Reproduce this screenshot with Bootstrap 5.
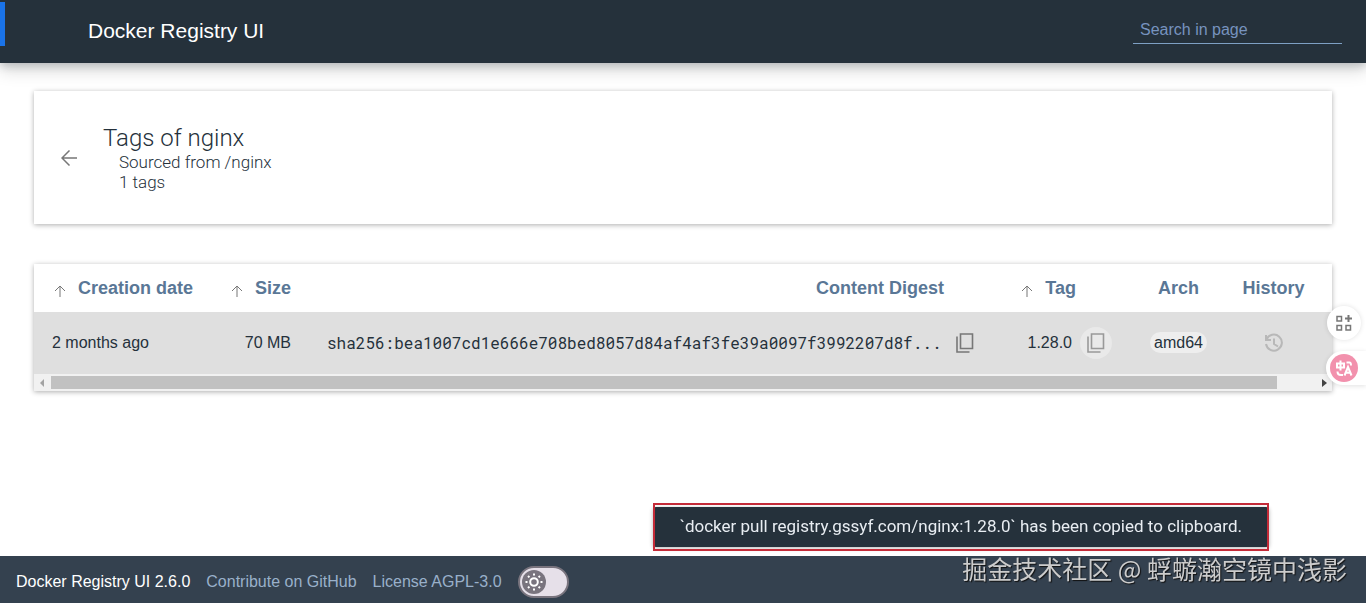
<!DOCTYPE html>
<html lang="en">
<head>
<meta charset="utf-8">
<meta name="viewport" content="width=device-width, initial-scale=1">
<title>Docker Registry UI</title>
<link rel="stylesheet" href="https://cdn.jsdelivr.net/npm/bootstrap@5.3.0/dist/css/bootstrap.min.css">
<style>
  body { font-family: "Liberation Sans", Arial, sans-serif; font-size: 16px; color: #25313b; background: #fff; }
  svg { display: block; flex: none; }
  .topbar { height: 63px; padding: 0 24px 2px 88px; background: #25313b; box-shadow: 0 3px 8px rgba(37,49,59,.22), 0 8px 16px rgba(0,0,0,.14); }
  .topbar .brand { font-size: 21px; line-height: 24px; color: #fff; text-decoration: none; }
  .edge-mark { top: 2px; left: 0; width: 5px; height: 44px; background: #1a73e8; }
  .search-box { width: 209px; height: 26px; padding: 0 7px; border: 0; border-bottom: 1px solid #7ea0c4; border-radius: 0; background: transparent; color: #fff; outline: 0; }
  .search-box::placeholder { color: #7793bf; opacity: 1; }
  main { padding: 28px 34px; }
  .panel { background: #fff; box-shadow: 0 1px 5px rgba(0,0,0,.32); }
  .head-panel { padding: 33px 24px 32px 20px; margin-bottom: 40px; font-family: Roboto, sans-serif; font-weight: 300; line-height: 20px; }
  .head-panel h1 { font-size: 24px; font-weight: 300; line-height: 28px; margin: 0; }
  .head-panel .info { font-size: 17px; padding: 0 0 0 16px; margin: 0; }
  .plain-btn { padding: 0; border: 0; background: transparent; color: #777; }
  .back-btn { width: 30px; height: 30px; margin-right: 19px; }
  .tags { table-layout: fixed; width: 100%; }
  .tags th { height: 48px; padding: 0 18px; font-size: 18px; color: #5a7796; text-align: right; white-space: nowrap; }
  .tags td { height: 62px; padding: 0 18px; background: #dfdfdf; white-space: nowrap; }
  .tags th svg { display: inline-block; margin: 4px 12px 0 0; color: #777; vertical-align: middle; }
  .tags th.digest-head { padding-right: 54px; }
  .tags th.tag-head { padding-right: 54px; }
  .tags .mid { padding: 0; text-align: center; }
  .c-date { width: 177px; } .c-size { width: 98px; } .c-tag { width: 132px; } .c-arch { width: 97px; } .c-hist { width: 105px; }
  .tags .end-cell { padding-right: 12px; }
  .tags .copy-cell { padding-right: 18px; }
  .digest { font-family: "Roboto Mono", "Liberation Mono", monospace; }
  .round-btn { width: 32px; height: 32px; border-radius: 50%; }
  .round-btn.hot { background: #e9e9e9; color: #999; }
  .arch { padding: 2px 4px; border-radius: 12px; background: #eee; }
  .scrollbar-x { height: 17px; padding: 0 5px; background: #f1f1f1; gap: 6px; }
  .scrollbar-x .rail { height: 13px; }
  .scrollbar-x .thumb { height: 13px; width: 97%; background: #c1c1c1; }
  .foot { min-height: 47px; padding: 4px 16px 0; background: #34414f; gap: 16px; line-height: 20px; color: #fff; }
  .foot a { color: #99b0ca; text-decoration: none; }
  .theme { width: 51px; height: 32px; border: 2px solid #79747e; border-radius: 16px; background: #e6e0e9; }
  .theme input { inset: 0; opacity: 0; margin: 0; }
  .theme svg { margin: 1px 0 0 1px; }
  .snack { right: 97px; bottom: 56px; height: 40px; padding: 0 27px; border-radius: 3px; background: #25313b; color: #e8edf2; font-family: Roboto, sans-serif; font-size: 17px; box-shadow: 0 1px 4px rgba(0,0,0,.3); }
  .snack::after { content: ""; position: absolute; inset: -4px 0; border: 2px solid #c42b38; }
  .credit { right: 19px; bottom: 17px; font-family: "Noto Sans CJK SC", sans-serif; font-size: 25px; line-height: 36px; color: #ccc; text-shadow: 1px 1px 1px #111; }
  .tools { right: 0; top: 306px; gap: 11px; }
  .tool-apps { width: 34px; height: 34px; margin-right: 5px; border-radius: 50%; background: #fff; box-shadow: 0 0 5px rgba(0,0,0,.12); }
  .tool-translate { width: 40px; height: 34px; padding-left: 4px; border-radius: 17px 0 0 17px; background: #fff; box-shadow: 0 1px 5px rgba(0,0,0,.12); }
</style>
</head>
<body class="d-flex flex-column min-vh-100">
<header class="topbar d-flex align-items-center justify-content-between position-relative">
  <span class="edge-mark position-absolute"></span>
  <a class="brand" href="#">Docker Registry UI</a>
  <input class="search-box" type="text" placeholder="Search in page" aria-label="Search in page">
</header>

<main class="flex-grow-1">
  <section class="panel head-panel d-flex align-items-center">
    <button class="plain-btn back-btn d-flex align-items-center justify-content-center" type="button" aria-label="Back">
      <svg width="16" height="16" viewBox="0 0 16 16" fill="none" stroke="currentColor" stroke-width="1.5"><path d="M16 8H1M8.500.5L1 8l7.500 7.500"/></svg>
    </button>
    <div>
      <h1>Tags of nginx</h1>
      <p class="info">Sourced from /nginx<br>1 tags</p>
    </div>
  </section>

  <section class="panel">
    <table class="tags">
      <colgroup><col class="c-date"><col class="c-size"><col><col class="c-tag"><col class="c-arch"><col class="c-hist"></colgroup>
      <thead>
        <tr>
          <th scope="col"><svg width="12" height="12" viewBox="0 0 12 12" fill="none" stroke="currentColor"><path d="M6 12V1M1 6l5-5 5 5"/></svg>Creation date</th>
          <th scope="col"><svg width="12" height="12" viewBox="0 0 12 12" fill="none" stroke="currentColor"><path d="M6 12V1M1 6l5-5 5 5"/></svg>Size</th>
          <th scope="col" class="digest-head">Content Digest</th>
          <th scope="col" class="tag-head"><svg width="12" height="12" viewBox="0 0 12 12" fill="none" stroke="currentColor"><path d="M6 12V1M1 6l5-5 5 5"/></svg>Tag</th>
          <th scope="col" class="mid">Arch</th>
          <th scope="col" class="mid end-cell">History</th>
        </tr>
      </thead>
      <tbody>
        <tr>
          <td>2 months ago</td>
          <td class="text-end">70 MB</td>
          <td class="copy-cell">
            <div class="d-flex align-items-center justify-content-end gap-2">
              <span class="digest">sha256:bea1007cd1e666e708bed8057d84af4af3fe39a0097f3992207d8f...</span>
              <button class="plain-btn round-btn d-flex align-items-center justify-content-center" type="button" aria-label="Copy digest">
                <svg width="18" height="20" viewBox="0 0 18 20" fill="none" stroke="currentColor" stroke-width="1.600"><path d="M4.500 1h12v14.500h-12zM1 3.500V19h12.500"/></svg>
              </button>
            </div>
          </td>
          <td class="copy-cell">
            <div class="d-flex align-items-center justify-content-end gap-2">
              <span>1.28.0</span>
              <button class="plain-btn round-btn hot d-flex align-items-center justify-content-center" type="button" aria-label="Copy pull command">
                <svg width="18" height="20" viewBox="0 0 18 20" fill="none" stroke="currentColor" stroke-width="1.600"><path d="M4.500 1h12v14.500h-12zM1 3.500V19h12.500"/></svg>
              </button>
            </div>
          </td>
          <td class="mid"><span class="arch">amd64</span></td>
          <td class="mid end-cell">
            <button class="plain-btn round-btn d-inline-flex align-items-center justify-content-center align-middle" type="button" aria-label="History">
              <svg width="20" height="20" viewBox="0 0 20 20" fill="none" stroke="#b8b8b8" stroke-width="2"><path d="M2.500 6.500A8 8 0 1 1 2 11M2 2v5h5M10 5.500V11l4 2.500"/></svg>
            </button>
          </td>
        </tr>
      </tbody>
    </table>
    <div class="scrollbar-x d-flex align-items-center" aria-hidden="true">
      <svg width="6" height="8" viewBox="0 0 6 8"><path d="M5 0v8L1 4z" fill="#a3a3a3"/></svg>
      <div class="rail flex-grow-1"><div class="thumb"></div></div>
      <svg width="6" height="8" viewBox="0 0 6 8"><path d="M1 0v8l5-4z" fill="#444"/></svg>
    </div>
  </section>
</main>

<footer class="foot d-flex align-items-center">
  <span>Docker Registry UI 2.6.0</span>
  <a href="#">Contribute on GitHub</a>
  <a href="#">License AGPL-3.0</a>
  <label class="theme position-relative">
    <input class="position-absolute w-100 h-100" type="checkbox" role="switch" aria-label="Dark theme">
    <svg width="26" height="26" viewBox="0 0 26 26"><circle cx="13" cy="13" r="12" fill="#79747e"/><g fill="none" stroke="#fff" stroke-width="2"><circle cx="13" cy="13" r="3.800"/><path d="M13 4.500v2M13 19.500v2M4.500 13h2M19.500 13h2M7 7l1.400 1.400M17.600 17.600L19 19M19 7l-1.400 1.400M8.400 17.600L7 19"/></g></svg>
  </label>
</footer>

<div class="snack position-fixed d-flex align-items-center" role="status">`docker pull registry.gssyf.com/nginx:1.28.0` has been copied to clipboard.</div>
<div class="credit position-fixed" lang="zh">掘金技术社区 @ 蜉蝣瀚空镜中浅影</div>

<aside class="tools position-fixed d-flex flex-column align-items-end">
  <button class="plain-btn tool-apps d-flex align-items-center justify-content-center" type="button" aria-label="Apps">
    <svg width="16" height="16" viewBox="0 0 16 16" fill="none" stroke="#777" stroke-width="1.500"><path d="M1 1.500h4.500V6H1zM1 10.500h4.500V15H1zM10 10.500h4.500V15H10z"/><path d="M12.500 0v7M9 3.500h7" stroke-width="2"/></svg>
  </button>
  <button class="plain-btn tool-translate d-flex align-items-center" type="button" aria-label="Translate">
    <svg width="28" height="28" viewBox="0 0 28 28" fill="none" stroke="#fff" stroke-width="2"><circle cx="14" cy="14" r="14" fill="#f291ad" stroke="none"/><path d="M7 9.500h7v4H7zM10.500 6.500v10M16.500 8.500h3q1.500 0 1.500 3M7.500 17.500q0 3.500 3.500 3.500h2M14.500 21.500l3.500-8.500 3.500 8.500M16 18.800h4"/></svg>
  </button>
</aside>
<script src="https://cdn.jsdelivr.net/npm/bootstrap@5.3.0/dist/js/bootstrap.bundle.min.js"></script>
</body>
</html>
